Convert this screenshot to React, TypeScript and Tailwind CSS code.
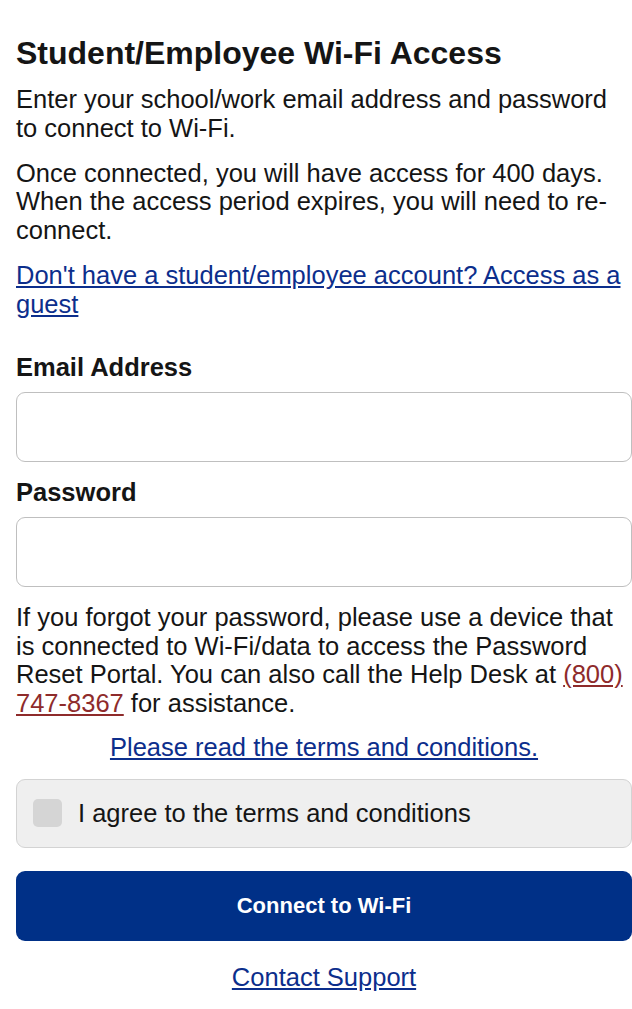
import { useState } from "react";

function App() {
    const [agreed, setAgreed] = useState(false);

    return (
        <div className="min-h-screen bg-white pl-4 pt-[35px] font-['Liberation_Sans',Arial,sans-serif] text-[#151515]">
            <h1 className="text-[32px] leading-[37px] font-bold">Student/Employee Wi-Fi Access</h1>

            <p className="mt-[13px] text-[25.5px] leading-[28.75px]">
                Enter your school/work email address and password to connect to Wi-Fi.
            </p>
            <p className="mt-[16px] text-[25.5px] leading-[28.75px]">
                Once connected, you will have access for 400 days. When the access period expires, you will need to re-connect.
            </p>
            <a href="#" className="mt-[16px] block text-[25.5px] leading-[28.75px] text-[#0c2e8c] underline underline-offset-2">
                Don't have a student/employee account? Access as a guest
            </a>

            <form className="mt-[35px] flex flex-col" onSubmit={(e) => e.preventDefault()}>
                <label className="text-[25.5px] leading-[28.75px] font-bold">Email Address</label>
                <input
                    type="email"
                    className="mt-[10px] h-[70px] w-full rounded-[9px] border-[1.5px] border-[#bfbfbf] bg-white px-4 text-[25.5px] outline-none"
                />

                <label className="mt-[16px] text-[25.5px] leading-[28.75px] font-bold">Password</label>
                <input
                    type="password"
                    className="mt-[10px] h-[70px] w-full rounded-[9px] border-[1.5px] border-[#bfbfbf] bg-white px-4 text-[25.5px] outline-none"
                />

                <p className="mt-[16px] text-[25.5px] leading-[28.75px]">
                    If you forgot your password, please use a device that is connected to Wi-Fi/data to access the Password Reset Portal. You can also call the Help Desk at{" "}
                    <a href="#" className="text-[#8e2b2b] underline underline-offset-2">(800)</a>{" "}
                    <a href="#" className="text-[#8e2b2b] underline underline-offset-2">747-8367</a> for assistance.
                </p>

                <a href="#" className="mt-[15px] text-center text-[25.5px] leading-[28.75px] text-[#0c2e8c] underline underline-offset-2">
                    Please read the terms and conditions.
                </a>

                <label className="mt-[17px] flex h-[69px] items-center gap-4 rounded-[9px] border-[1.5px] border-[#d3d3d3] bg-[#efefef] px-4">
                    <button
                        type="button"
                        onClick={() => setAgreed(!agreed)}
                        className={`h-[28px] w-[29px] rounded-[5px] ${agreed ? 'bg-[#003087]' : 'bg-[#d5d5d5]'}`}
                    />
                    <span className="text-[25.5px] leading-[28.75px]">I agree to the terms and conditions</span>
                </label>

                <button
                    type="submit"
                    className="mt-[23px] h-[70px] w-full rounded-[9px] bg-[#003087] text-[22px] font-bold text-white"
                >
                    Connect to Wi-Fi
                </button>

                <a href="#" className="mt-[22px] text-center text-[25.5px] leading-[28.75px] text-[#0c2e8c] underline underline-offset-2">
                    Contact Support
                </a>
            </form>
        </div>
    );
}

export default App;
